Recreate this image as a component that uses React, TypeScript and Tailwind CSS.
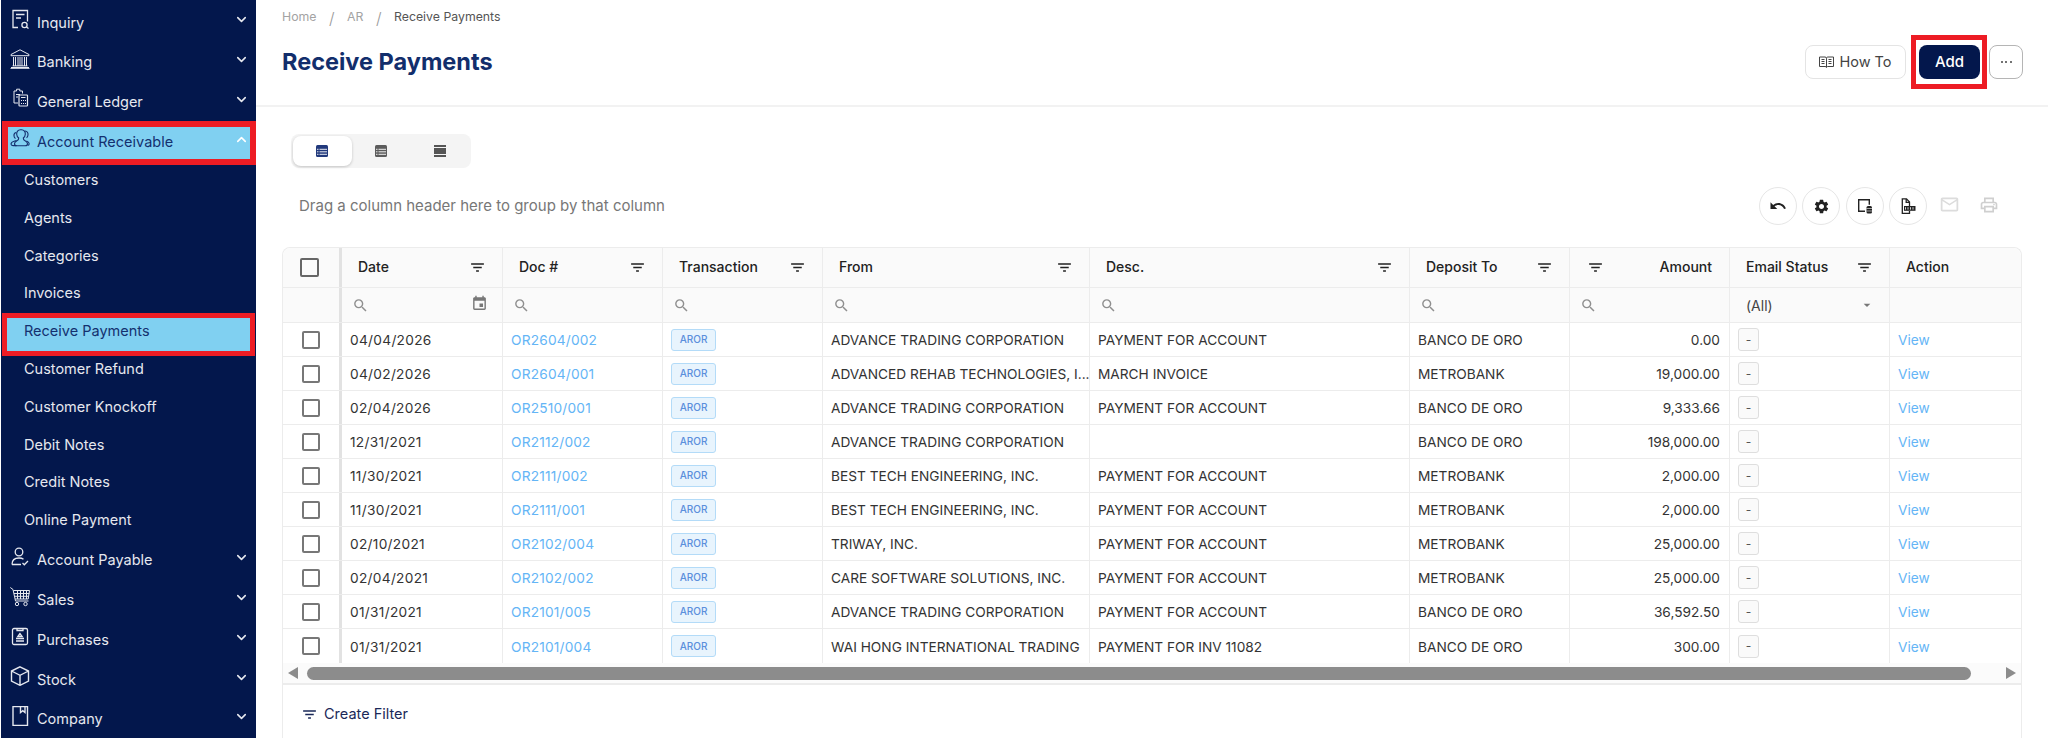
import { ChevronDown, ChevronUp } from 'lucide-react';
import { MdFilterList, MdSearch, MdEvent, MdUndo, MdSettings, MdMailOutline, MdOutlinePrint, MdArrowDropDown } from 'react-icons/md';
import type { ReactNode } from 'react';

const font = 'font-["Inter","Liberation_Sans",sans-serif]';
const cols = 'grid grid-cols-[59px_160px_160px_160px_267px_320px_160px_160px_160px_133px]';

function Svg({ children }: { children: ReactNode }) {
  return (
    <svg width="20" height="20" viewBox="0 0 20 20" fill="none" stroke="currentColor" strokeWidth="1" className="mb-[6px] shrink-0">
      {children}
    </svg>
  );
}

const icons: Record<string, ReactNode> = {
  inquiry: <Svg><path d="M8 18.5H3V1.5h14.5v11M6 5.5h8.500M6 9h5" strokeWidth="1.3" /><circle cx="14.5" cy="16" r="2.6" strokeWidth="1.3" /><path d="m16.5 18 2 1.5" strokeWidth="1.3" /></Svg>,
  bank: <Svg><path d="M10 .8 1 5.500v1.200h18V5.500zM1 18.500h18M.5 19.700h19M2.500 16.900h15M3.500 8v9M5.500 8v9M8 8v9M10 8v9M12 8v9M14.500 8v9M16.500 8v9" /></Svg>,
  ledger: <Svg><path d="M12.500 5.500V3h-2.700V1.200H6.600V3H4v12h4M6 6.500h4M6 9h2" /><rect x="9" y="7" width="8.500" height="11" rx=".8" strokeWidth="1.2" /><path d="M11 9.500h4.500M11 12.500h1M13 12.500h1M15 12.500h1M11 15.500h1M13 15.500h1M15 15.500h1" strokeWidth="1.2" /></Svg>,
  users: (
    <Svg>
      <path d="M6.500 12.500c-1.500.8-5.500 1-5.500 3.500 0 1.200 1 1.600 2 1.600h3.500M6 4.500C4.200 5 3.800 6.500 4 8c.1 1 .7 2 1.500 2.500" strokeWidth="1.100" />
      <path d="M10.500 1.800c-2.600 0-4 2-3.800 4.400.1 1.500.9 3 2 3.800.1 1.500-.6 2.200-1.700 2.700-1.200.6-2.500 1.200-2.500 3 0 1.300.9 2 2.200 2h8.600c1.300 0 2.200-.7 2.200-2 0-1.800-1.300-2.400-2.500-3-1.100-.5-1.800-1.200-1.700-2.700 1.100-.8 1.900-2.300 2-3.800.2-2.400-1.200-4.400-3.800-4.400z" strokeWidth="1.100" />
      <path d="M15 3c2 .3 3.200 2 3 4-.1 1.100-.6 2.100-1.400 2.800M16.500 13c1.300.5 2.700 1.100 2.700 2.800 0 .9-.6 1.500-1.500 1.700" strokeWidth="1.100" />
    </Svg>
  ),
  payable: <Svg><circle cx="9" cy="5" r="3.800" strokeWidth="1.300" /><path d="M2 17.500c0-4.500 3-6.500 7-6.500 2 0 3.500.5 4.500 1.300M2 17.500h9M12.500 16l1.800 1.800 3.700-3.800" strokeWidth="1.300" /></Svg>,
  cart: <Svg><path d="M.3.5 3 2.500l2.500 11.500h13M3.500 3.500h16l-1.300 8.500H5.200M7.500 3.500V12M10.500 3.500V12M13.500 3.500V12M16.500 3.500V12M4 6.500h15.500M4.500 9.300h14.500" /><circle cx="7" cy="17" r="1.700" /><circle cx="15.500" cy="17" r="1.700" /></Svg>,
  purchase: <Svg><rect x="2.500" y="2.500" width="15" height="16" rx="1.500" strokeWidth="1.300" /><path d="M7 2.500V4.500h6V2.500M6 15h8M6 12.500h8M10 7.500 7.800 10.500h4.400z" strokeWidth="1.300" /></Svg>,
  box: <Svg><path d="M10 .8 18.500 5v10L10 19.300 1.500 15V5zM1.500 5 10 9.300 18.500 5M10 9.300v10" strokeWidth="1.400" /></Svg>,
  book: <Svg><path d="M3 .5h14.500v19H3zM10.500.5v6l2.300-1.800 2.200 1.800v-6" strokeWidth="1.400" /></Svg>,
};

function Parent({ icon, label }: { icon: string; label: string }) {
  return (
    <div className="flex h-[39.75px] items-center pl-[9px] pr-[14px] text-[#e6e8ef]">
      <span className="flex w-[20px] justify-center">{icons[icon]}</span>
      <span className="ml-[7px] mt-[1px] flex-1 text-[14.5px]">{label}</span>
      <ChevronDown size={15} strokeWidth={2.5} className="mb-[4px] ml-[2px] mr-[-7px]" />
    </div>
  );
}

function Child({ label, active }: { label: string; active?: boolean }) {
  return (
    <div className="relative flex h-[37.8px] items-center pl-[23px] text-[14.5px]">
      {active && <div className="absolute left-[1px] top-[0.5px] h-[43px] w-[253px] border-[5px] border-[#ed1c24] bg-[#80d0f1]" />}
      <span className={active ? 'relative text-[#14306f]' : 'text-[#e6e8ef]'}>{label}</span>
    </div>
  );
}

function Sidebar() {
  return (
    <aside className="ml-[1px] w-[255px] shrink-0 bg-[#03174c] pt-[2px]">
      <Parent icon="inquiry" label="Inquiry" />
      <Parent icon="bank" label="Banking" />
      <Parent icon="ledger" label="General Ledger" />
      <div className="relative flex h-[39.75px] items-center pl-[9px] pr-[14px] text-[#14306f]">
        <div className="absolute left-[1px] top-0 h-[44px] w-[254px] border-[6px] border-[#ed1c24] bg-[#80d0f1]" />
        <span className="relative flex w-[20px] justify-center text-[#14306f]">{icons.users}</span>
        <span className="relative ml-[7px] mt-[1px] flex-1 text-[14.5px]">Account Receivable</span>
        <ChevronUp size={15} strokeWidth={2.5} className="relative mb-[4px] ml-[2px] mr-[-7px] text-white" />
      </div>
      <Child label="Customers" />
      <Child label="Agents" />
      <Child label="Categories" />
      <Child label="Invoices" />
      <Child label="Receive Payments" active />
      <Child label="Customer Refund" />
      <Child label="Customer Knockoff" />
      <Child label="Debit Notes" />
      <Child label="Credit Notes" />
      <Child label="Online Payment" />
      <div className="h-[1px]" />
      <Parent icon="payable" label="Account Payable" />
      <Parent icon="cart" label="Sales" />
      <Parent icon="purchase" label="Purchases" />
      <Parent icon="box" label="Stock" />
      <Parent icon="book" label="Company" />
    </aside>
  );
}

function Header() {
  return (
    <header className="flex h-[107px] shrink-0 border-b-2 border-[#f2f2f2] pl-[26px] pr-[25px]">
      <div className="flex-1">
        <div className="flex h-[35px] items-center text-[12.3px]">
          <span className="text-[#a3a3a3]">Home</span>
          <span className="mx-[12.500px] text-[16px] font-light text-[#999]">/</span>
          <span className="text-[#a3a3a3]">AR</span>
          <span className="mx-[12.500px] text-[16px] font-light text-[#999]">/</span>
          <span className="text-[#555]">Receive Payments</span>
        </div>
        <h1 className="mt-[11px] text-[23.5px] font-bold leading-[32px] text-[#122e6c]">Receive Payments</h1>
      </div>
      <div className="flex items-start pt-[45px]">
        <button className="flex h-[34px] w-[101px] items-center justify-center gap-[5px] rounded-[8px] border border-[#e4e4e4] text-[14.5px] text-[#444]">
          <svg width="15" height="12" viewBox="0 0 15 12" fill="none" stroke="#444" strokeWidth="1">
            <path d="M.5 1h5.500c.8 0 1.500.5 1.500 1.200C7.500 1.500 8.200 1 9 1h5.500v9.500H9c-.8 0-1.500.4-1.500 1 0-.6-.7-1-1.500-1H.5zM7.500 2.200V11M2.500 3.500h3M2.500 5.500h3M2.500 7.500h3M9.500 3.500h3M9.500 5.500h3M9.500 7.500h3" />
          </svg>
          How To
        </button>
        <div className="relative ml-[13px]">
          <div className="absolute left-[-8px] top-[-10px] h-[54px] w-[76px] border-[5px] border-[#ed1c24]" />
          <button className="relative h-[34px] w-[61px] rounded-[8px] bg-[#03174c] text-[15px] font-medium text-white">Add</button>
        </div>
        <button className="ml-[9px] flex h-[34px] w-[34px] items-center justify-center gap-[2.500px] rounded-[8px] border border-[#b5b5b5]">
          <span className="h-[2px] w-[2px] rounded-full bg-[#444]" />
          <span className="h-[2px] w-[2px] rounded-full bg-[#444]" />
          <span className="h-[2px] w-[2px] rounded-full bg-[#444]" />
        </button>
      </div>
    </header>
  );
}

function TableGlyph({ color }: { color: string }) {
  return (
    <svg width="12" height="12" viewBox="0 0 12 12">
      <rect width="12" height="12" rx="1.500" fill={color} />
      <path d="M1 4.300h1.500M3.500 4.300H11M1 6.800h1.500M3.500 6.800H11M1 9.300h1.500M3.500 9.300H11" stroke="#fff" strokeWidth=".9" />
    </svg>
  );
}

function ViewTabs() {
  return (
    <div className="ml-[9px] mt-[27px] flex h-[34px] w-[180px] items-center rounded-[8px] bg-[#f4f4f4] px-[2px]">
      <div className="flex h-[30px] w-[59px] items-center justify-center rounded-[8px] bg-white shadow-[0_1px_3px_rgba(0,0,0,0.2)]">
        <TableGlyph color="#21397c" />
      </div>
      <div className="flex h-[30px] w-[59px] items-center justify-center">
        <TableGlyph color="#5c5c5c" />
      </div>
      <div className="flex h-[30px] w-[59px] items-center justify-center">
        <div className="flex w-[12px] flex-col gap-[1px]">
          <div className="h-[2px] bg-[#555]" />
          <div className="h-[6px] bg-[#555]" />
          <div className="h-[2px] bg-[#555]" />
        </div>
      </div>
    </div>
  );
}

function Round({ children, gap }: { children: ReactNode; gap?: boolean }) {
  return (
    <button className={`flex h-[38px] w-[38px] items-center justify-center rounded-full border border-[#e6e6e6] text-[#222] ${gap ? 'ml-[5.500px]' : ''}`}>
      {children}
    </button>
  );
}

function Toolbar() {
  return (
    <div className="mt-[19px] flex h-[38px] items-center justify-between pl-[17px]">
      <span className="text-[15px] text-[#777]">Drag a column header here to group by that column</span>
      <div className="flex items-center">
        <Round><MdUndo size={18} /></Round>
        <Round gap><MdSettings size={17} /></Round>
        <Round gap>
          <svg width="16" height="16" viewBox="0 0 16 16" fill="none" stroke="#222" strokeWidth="1.400">
            <path d="M8 13.300H1.700V1.700h10.600v5" />
            <rect x="9.500" y="8" width="5.500" height="7.500" rx="1.500" fill="#222" stroke="none" />
            <path d="M9.500 10.500h5.500M9.500 13h5.500" stroke="#fff" strokeWidth=".6" />
          </svg>
        </Round>
        <Round gap>
          <svg width="16" height="16" viewBox="0 0 16 16" fill="none" stroke="#222" strokeWidth="1.300">
            <path d="M9.500 8V4L6.500.8H2.300v14.500h7.200V13" />
            <path d="M6.200 1v3.300h3.300" />
            <rect x="4" y="8" width="11.500" height="4.800" fill="#222" stroke="none" />
            <path d="M5.500 9.200v2.400M8 9.200v2.400M10.500 9.200v2.400M13 9.200v2.400" stroke="#fff" strokeWidth=".8" />
          </svg>
        </Round>
        <MdMailOutline size={21} className="mb-[3px] ml-[11.500px] text-[#dcdcdc]" />
        <MdOutlinePrint size={20} className="mb-[3px] ml-[19.500px] mr-[23px] text-[#cfcfcf]" />
      </div>
    </div>
  );
}

function HeadCell({ label, right, noFilter }: { label: string; right?: boolean; noFilter?: boolean }) {
  const filter = <MdFilterList size={17} className="shrink-0 text-[#222]" />;
  if (right) {
    return (
      <div className="flex items-center justify-between border-l border-[#ececec] pl-[17px] pr-[17px] text-[14px] font-medium text-[#222]">
        {filter}
        <span className="mb-[2px]">{label}</span>
      </div>
    );
  }
  return (
    <div className="flex items-center justify-between border-l border-[#ececec] pl-[16px] pr-[16px] text-[14px] font-medium text-[#222]">
      <span className="mb-[2px]">{label}</span>
      {!noFilter && filter}
    </div>
  );
}

function SearchCell() {
  return (
    <div className="flex items-center border-l border-[#ececec] pl-[10px] text-[#8f8f8f]">
      <MdSearch size={17} />
    </div>
  );
}

const rows = [
  ['04/04/2026', 'OR2604/002', 'ADVANCE TRADING CORPORATION', 'PAYMENT FOR ACCOUNT', 'BANCO DE ORO', '0.00'],
  ['04/02/2026', 'OR2604/001', 'ADVANCED REHAB TECHNOLOGIES, I...', 'MARCH INVOICE', 'METROBANK', '19,000.00'],
  ['02/04/2026', 'OR2510/001', 'ADVANCE TRADING CORPORATION', 'PAYMENT FOR ACCOUNT', 'BANCO DE ORO', '9,333.66'],
  ['12/31/2021', 'OR2112/002', 'ADVANCE TRADING CORPORATION', '', 'BANCO DE ORO', '198,000.00'],
  ['11/30/2021', 'OR2111/002', 'BEST TECH ENGINEERING, INC.', 'PAYMENT FOR ACCOUNT', 'METROBANK', '2,000.00'],
  ['11/30/2021', 'OR2111/001', 'BEST TECH ENGINEERING, INC.', 'PAYMENT FOR ACCOUNT', 'METROBANK', '2,000.00'],
  ['02/10/2021', 'OR2102/004', 'TRIWAY, INC.', 'PAYMENT FOR ACCOUNT', 'METROBANK', '25,000.00'],
  ['02/04/2021', 'OR2102/002', 'CARE SOFTWARE SOLUTIONS, INC.', 'PAYMENT FOR ACCOUNT', 'METROBANK', '25,000.00'],
  ['01/31/2021', 'OR2101/005', 'ADVANCE TRADING CORPORATION', 'PAYMENT FOR ACCOUNT', 'BANCO DE ORO', '36,592.50'],
  ['01/31/2021', 'OR2101/004', 'WAI HONG INTERNATIONAL TRADING', 'PAYMENT FOR INV 11082', 'BANCO DE ORO', '300.00'],
];

function Row({ row, last }: { row: string[]; last: boolean }) {
  const box = 'flex items-center border-l border-[#ececec] pl-[8px] pr-[8px] whitespace-nowrap overflow-hidden';
  const cell = `${box} pt-[2px]`;
  return (
    <div className={`${cols} h-[34px] text-[13.7px] text-[#333] ${last ? '' : 'border-b border-[#ececec]'}`}>
      <div className="flex items-center border-r-[3px] border-[#e2e2e2] pl-[19px]">
        <div className="h-[18px] w-[18px] rounded-[2px] border-2 border-[#777]" />
      </div>
      <div className="flex items-center pl-[8px] pt-[2px] tracking-[0.3px]">{row[0]}</div>
      <div className={`${cell} tracking-[0.2px] text-[#64b5f6]`}>{row[1]}</div>
      <div className={box}>
        <span className="flex h-[22px] w-[45px] items-center justify-center rounded-[3px] border border-[#b3dbf8] bg-[#e8f4fd] text-[10px] font-medium text-[#5b8fdc]">AROR</span>
      </div>
      <div className={cell}>{row[2]}</div>
      <div className={cell}>{row[3]}</div>
      <div className={cell}>{row[4]}</div>
      <div className={`${cell} justify-end pr-[9px]`}>{row[5]}</div>
      <div className={box}>
        <span className="flex h-[23px] w-[21px] items-center justify-center rounded-[3px] border border-[#dedede] bg-[#fafafa] text-[12px] text-[#555]">-</span>
      </div>
      <div className={`${cell} text-[#64b5f6]`}>View</div>
    </div>
  );
}

function DataTable() {
  return (
    <div className="mt-[22px] flex flex-1 flex-col rounded-t-[8px] border-x border-t border-[#ececec]">
      <div className={`${cols} h-[40px] rounded-t-[8px] border-b border-[#ececec] bg-[#fafafa]`}>
        <div className="flex items-center border-r-[3px] border-[#e2e2e2] pl-[17px]">
          <div className="h-[19px] w-[19px] rounded-[2px] border-2 border-[#666]" />
        </div>
        <div className="flex items-center justify-between pl-[16px] pr-[16px] text-[14px] font-medium text-[#222]">
          <span className="mb-[2px]">Date</span>
          <MdFilterList size={17} className="text-[#222]" />
        </div>
        <HeadCell label="Doc #" />
        <HeadCell label="Transaction" />
        <HeadCell label="From" />
        <HeadCell label="Desc." />
        <HeadCell label="Deposit To" />
        <HeadCell label="Amount" right />
        <HeadCell label="Email Status" />
        <HeadCell label="Action" noFilter />
      </div>
      <div className={`${cols} h-[35px] border-b border-[#ececec] bg-[#fafafa]`}>
        <div className="border-r-[3px] border-[#e2e2e2]" />
        <div className="flex items-center justify-between pl-[10px] pr-[14px] text-[#8f8f8f]">
          <MdSearch size={17} />
          <MdEvent size={17} className="mb-[3px] text-[#777]" />
        </div>
        <SearchCell />
        <SearchCell />
        <SearchCell />
        <SearchCell />
        <SearchCell />
        <SearchCell />
        <div className="flex items-center justify-between border-l border-[#ececec] pl-[16px] pr-[14px] text-[14px] text-[#444]">
          <span>(All)</span>
          <MdArrowDropDown size={16} className="text-[#777]" />
        </div>
        <div className="border-l border-[#ececec]" />
      </div>
      {rows.map((row, i) => (
        <Row key={i} row={row} last={i === rows.length - 1} />
      ))}
      <div className="flex h-[22px] items-center border-b-2 border-[#ececec] bg-[#fbfbfb] pl-[5px] pr-[5px]">
        <div className="h-0 w-0 border-y-[6px] border-r-[10px] border-y-transparent border-r-[#8c8c8c]" />
        <div className="ml-[9px] h-[13px] w-[1664px] rounded-full bg-[#8c8c8c]" />
        <div className="ml-auto h-0 w-0 border-y-[6px] border-l-[10px] border-y-transparent border-l-[#8c8c8c]" />
      </div>
      <div className="flex h-[60px] items-center pb-[2px] pl-[18px] text-[14.5px] text-[#1a2858]">
        <MdFilterList size={17} />
        <span className="ml-[6px]">Create Filter</span>
      </div>
    </div>
  );
}

export default function App() {
  return (
    <div className={`flex h-[738px] w-[2048px] overflow-hidden bg-white ${font}`}>
      <Sidebar />
      <main className="flex min-w-0 flex-1 flex-col">
        <Header />
        <div className="flex flex-1 flex-col pl-[26px] pr-[26px]">
          <ViewTabs />
          <Toolbar />
          <DataTable />
        </div>
      </main>
    </div>
  );
}
